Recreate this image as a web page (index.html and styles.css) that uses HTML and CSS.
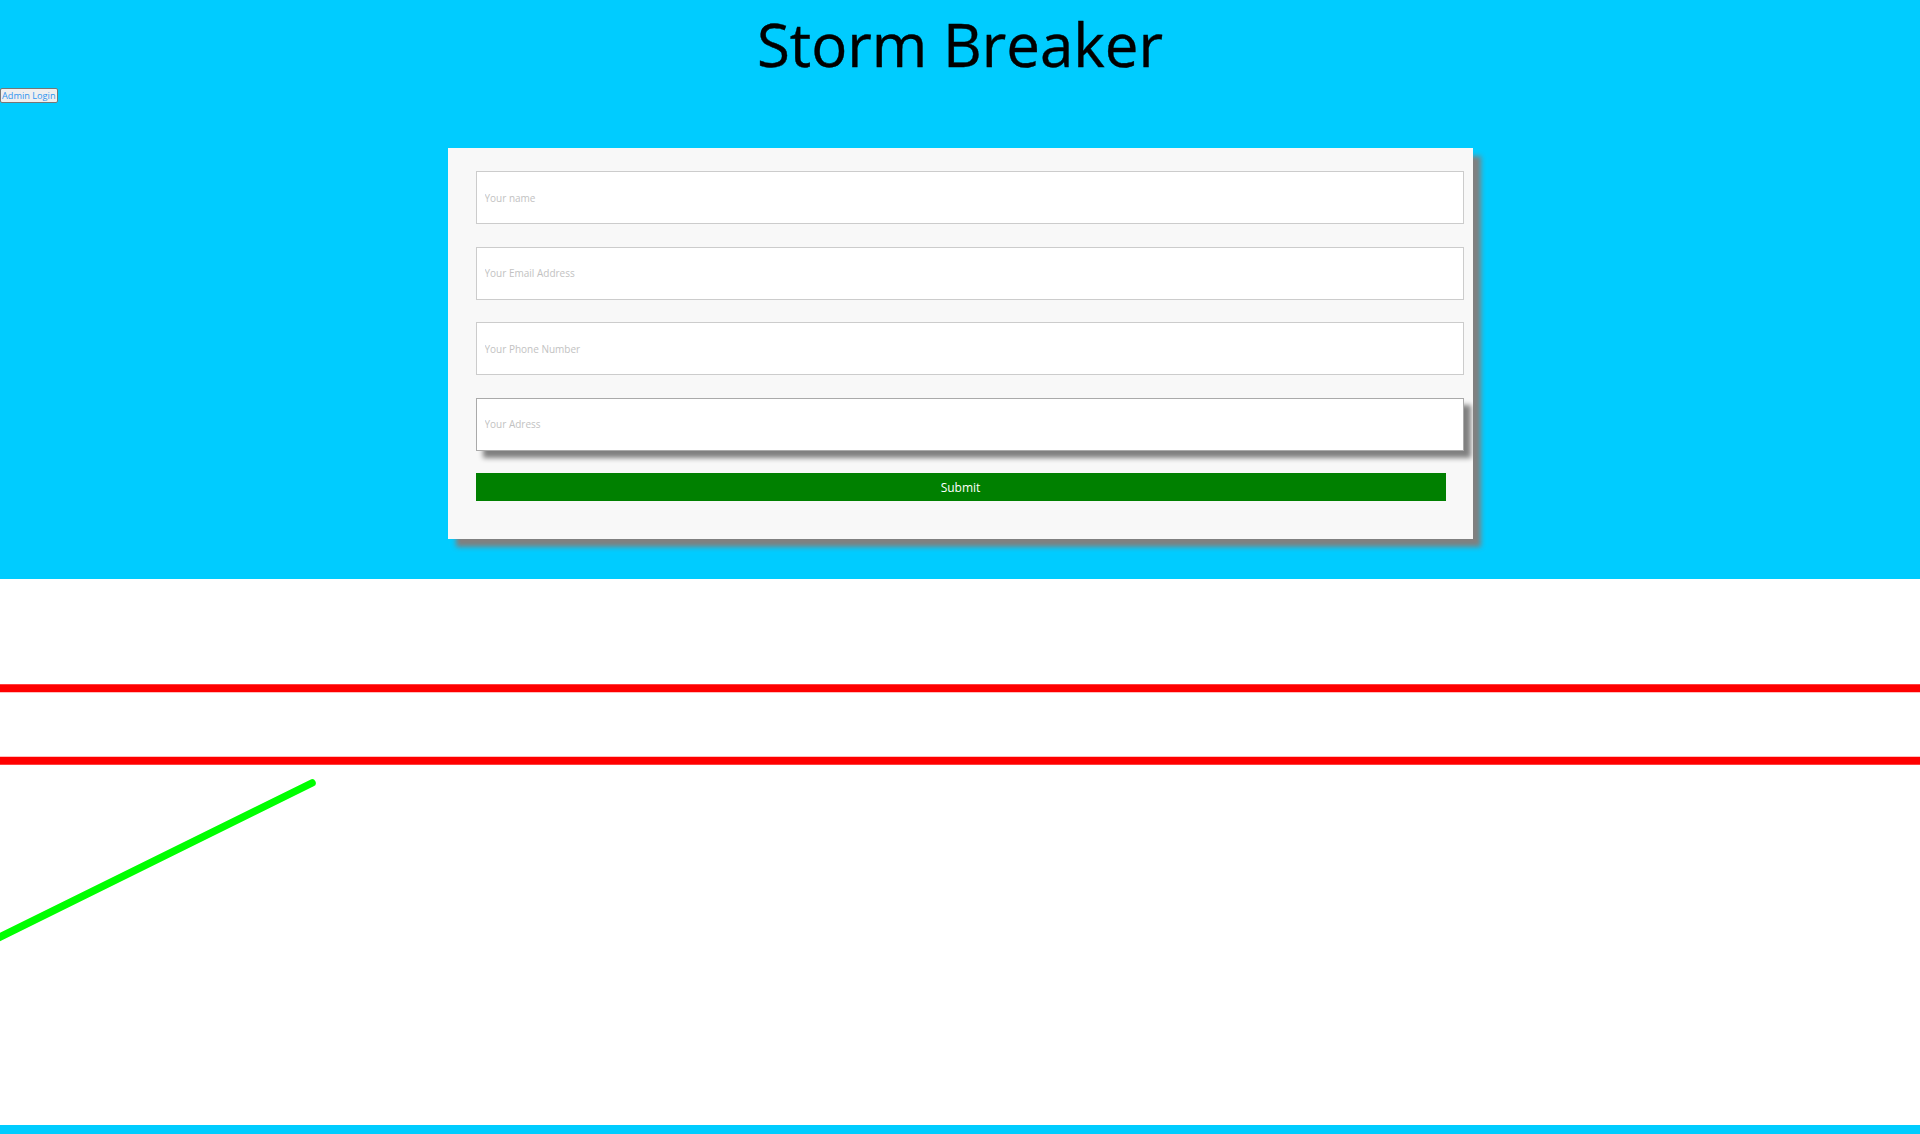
FILE: index.html
```html
<!DOCTYPE html>
<html lang="en">
<head>
<meta charset="utf-8">
<title>Storm Breaker</title>
<link rel="stylesheet" href="styles.css">
</head>
<body>
<header class="hero">
  <h1 class="title">Storm Breaker</h1>
  <button class="admin-btn" type="button">Admin Login</button>
  <form class="card">
    <input class="field" type="text" placeholder="Your name">
    <input class="field" type="email" placeholder="Your Email Address">
    <input class="field" type="tel" placeholder="Your Phone Number">
    <input class="field field-active" type="text" placeholder="Your Adress">
    <button class="submit" type="button">Submit</button>
  </form>
</header>
<main class="drawing">
  <svg class="canvas" viewBox="0 0 1920 546" width="1920" height="546" aria-hidden="true">
    <line x1="0" y1="109.3" x2="1920" y2="109.3" stroke="#ff0000" stroke-width="8"/>
    <line x1="0" y1="181.7" x2="1920" y2="181.7" stroke="#ff0000" stroke-width="8"/>
    <line x1="-10" y1="362.9" x2="312" y2="204" stroke="#00ff00" stroke-width="7.5" stroke-linecap="round"/>
  </svg>
</main>
<footer class="footer"></footer>
</body>
</html>
```
FILE: styles.css
```css
html, body {
  margin: 0;
  padding: 0;
  overflow: hidden;
}
body {
  font-family: "Open Sans", "Liberation Sans", sans-serif;
  background: #ffffff;
}
.hero {
  background: #00ccff;
  height: 579px;
  box-sizing: border-box;
  padding-bottom: 40px;
}
.title {
  margin: 0;
  padding-top: 4px;
  font-size: 60px;
  line-height: 80px;
  font-weight: 400;
  color: #000;
  text-align: center;
  -webkit-text-stroke: 0.4px #000;
}
.admin-btn {
  display: block;
  margin: 4px 0 0 0;
  padding: 0 1px;
  height: 15px;
  font-family: "Open Sans", "Liberation Sans", sans-serif;
  font-size: 9.2px;
  line-height: 13px;
  color: #2f95f0;
  background: #efefef;
  border: 1px solid #767676;
  border-radius: 2px;
}
.card {
  width: 1025px;
  box-sizing: border-box;
  margin: 45px auto 0;
  padding: 23px 9px 38px 28px;
  background: #f8f8f8;
  box-shadow: 8px 8px 5px #808080;
  display: flex;
  flex-direction: column;
  gap: 22.5px;
}
.field {
  display: block;
  width: 100%;
  height: 53px;
  box-sizing: border-box;
  margin: 0;
  padding: 0 8px;
  border: 1px solid #cccccc;
  background: #ffffff;
  font-family: "Open Sans", "Liberation Sans", sans-serif;
  font-size: 10px;
  outline: none;
}
.field::placeholder {
  color: #c2c2c2;
}
.field-active {
  border-color: #aaaaaa;
  box-shadow: 7px 7px 5px #808080;
}
.submit {
  display: block;
  width: 970px;
  height: 28px;
  margin: 0;
  padding: 0;
  border: none;
  background: #008000;
  color: #ffffff;
  font-family: "Open Sans", "Liberation Sans", sans-serif;
  font-size: 12px;
}
.drawing {
  height: 546px;
  background: #ffffff;
}
.canvas {
  display: block;
  width: 100%;
  height: 546px;
}
.footer {
  height: 9px;
  background: #00ccff;
}
```
